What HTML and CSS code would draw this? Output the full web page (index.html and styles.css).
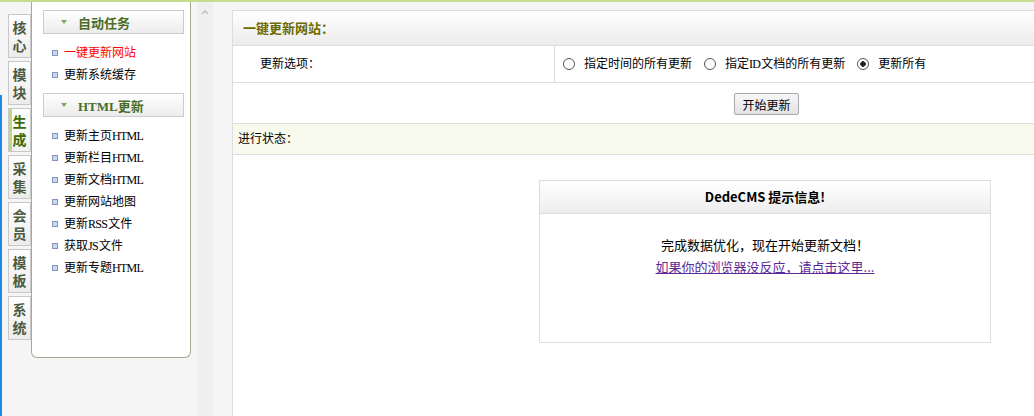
FILE: index.html
```html
<!DOCTYPE html>
<html lang="zh-cn">
<head>
  <meta charset="UTF-8" />
  <title>生成</title>
  <link rel="stylesheet" href="styles.css">
</head>
<body>

<div class="left-frame">
  <ul class="tabs">
    <li class="tab">核<br>心</li>
    <li class="tab">模<br>块</li>
    <li class="tab active">生<br>成</li>
    <li class="tab">采<br>集</li>
    <li class="tab">会<br>员</li>
    <li class="tab">模<br>板</li>
    <li class="tab">系<br>统</li>
  </ul>

  <div class="menu-panel">
    <div class="menu-head"><span class="arrow"></span>自动任务</div>
    <ul class="menu-list">
      <li class="current"><span class="dot"></span>一键更新网站</li>
      <li><span class="dot"></span>更新系统缓存</li>
    </ul>

    <div class="menu-head"><span class="arrow"></span>HTML更新</div>
    <ul class="menu-list">
      <li><span class="dot"></span>更新主页<span class="en">HTML</span></li>
      <li><span class="dot"></span>更新栏目<span class="en">HTML</span></li>
      <li><span class="dot"></span>更新文档<span class="en">HTML</span></li>
      <li><span class="dot"></span>更新网站地图</li>
      <li><span class="dot"></span>更新<span class="en">RSS</span>文件</li>
      <li><span class="dot"></span>获取<span class="en">JS</span>文件</li>
      <li><span class="dot"></span>更新专题<span class="en">HTML</span></li>
    </ul>
  </div>
</div>

<div class="scroll-strip">
  <svg width="8" height="6" viewBox="0 0 8 6"><path d="M1 5 L4 2 L7 5" fill="none" stroke="#c4c4c4" stroke-width="1.6"/></svg>
</div>

<div class="right-frame">
  <div class="main">
    <div class="main-head">一键更新网站：</div>

    <div class="row row-options">
      <div class="cell-label">更新选项：</div>
      <div class="cell-value">
        <label class="opt"><input type="radio" name="uptype" class="radio">指定时间的所有更新</label>
        <label class="opt"><input type="radio" name="uptype" class="radio">指定<span class="en">ID</span>文档的所有更新</label>
        <label class="opt"><input type="radio" name="uptype" class="radio" checked>更新所有</label>
      </div>
    </div>

    <div class="row row-button">
      <button class="btn">开始更新</button>
    </div>

    <div class="row row-status">进行状态：</div>

    <div class="msg-box">
      <div class="msg-head">DedeCMS 提示信息!</div>
      <div class="msg-body">
        完成数据优化，现在开始更新文档！<br>
        <a href="#" class="msg-link">如果你的浏览器没反应，请点击这里...</a>
      </div>
    </div>
  </div>
</div>

</body>
</html>
```

FILE: styles.css
```css
html, body {
  margin: 0;
  padding: 0;
  height: 100%;
}

body {
  box-sizing: border-box;
  height: 100vh;
  border-top: 2px solid #c6dc90;
  display: flex;
  overflow: hidden;
  font-family: "Liberation Serif", "Noto Sans CJK SC", serif;
  font-size: 12px;
  color: #000;
  background: #f5f5f5;
}

ul {
  list-style: none;
  margin: 0;
  padding: 0;
}

/* 宋体里的英文字母比较窄 */
.en {
  letter-spacing: -0.7px;
  margin-right: 1px;
}

/* 左侧菜单框架 */
.left-frame {
  width: 197px;
  flex: none;
  display: flex;
  align-items: flex-start;
  background: linear-gradient(#f5f5f5 0 93px, #1e8ae4 93px) no-repeat 0 0 / 2px 100%, #f5f5f5;
}

.tabs {
  padding: 12px 0 0 8px;
}

.tab {
  box-sizing: border-box;
  width: 23px;
  height: 44px;
  margin-bottom: 3px;
  padding-top: 3px;
  border: 1px solid #c8c8c8;
  background: linear-gradient(#ffffff, #ececec);
  text-align: center;
  font-family: "Noto Sans CJK SC", sans-serif;
  font-size: 14px;
  font-weight: bold;
  line-height: 18px;
  color: #4b5a40;
}

.tab.active {
  color: #3d6a00;
  box-shadow: inset 3px 0 0 #bcd98a;
  background: linear-gradient(#ffffff, #f2f2f2);
}

.menu-panel {
  box-sizing: border-box;
  width: 160px;
  height: 356px;
  padding: 8px 6px 0 11px;
  background: #fff;
  border: 1px solid #a9a991;
  border-top: none;
  border-radius: 0 0 6px 6px;
}

.menu-head {
  box-sizing: border-box;
  height: 24px;
  display: flex;
  align-items: center;
  padding-left: 17px;
  border: 1px solid #cccccc;
  background: linear-gradient(#ffffff, #ececec);
  font-family: "Liberation Serif", "Noto Sans CJK SC", serif;
  font-size: 13px;
  font-weight: bold;
  color: #4a6e2a;
}

.arrow {
  width: 0;
  height: 0;
  margin-right: 11px;
  border-left: 3px solid transparent;
  border-right: 3px solid transparent;
  border-top: 4px solid #78aa58;
}

.menu-list {
  margin: 8px 0 7px;
}

.menu-list li {
  display: flex;
  align-items: center;
  height: 22px;
  line-height: 22px;
  padding-left: 9px;
  white-space: nowrap;
}

.menu-list li.current {
  color: #ff0000;
}

.dot {
  box-sizing: border-box;
  width: 6px;
  height: 6px;
  margin-right: 6px;
  border: 1px solid #8497bd;
  background: #c9d7f0;
}

/* 滚动条 */
.scroll-strip {
  width: 16px;
  flex: none;
  background: #efefef;
  text-align: center;
  padding-top: 7px;
}

.scroll-strip svg {
  display: block;
  margin: 0 auto;
}

/* 右侧主框架 */
.right-frame {
  flex: 1;
  min-width: 0;
  padding: 8px 0 0 19px;
  background: #f5f5f5;
  overflow: hidden;
}

.main {
  width: 1064px;
  height: 100%;
  background: #fff;
  border-left: 1px solid #dddddd;
  border-top: 1px solid #dddddd;
}

.main-head {
  height: 34px;
  line-height: 34px;
  padding-left: 10px;
  border-bottom: 1px solid #dddddd;
  background: linear-gradient(#ffffff, #ececec);
  font-family: "Noto Sans CJK SC", sans-serif;
  font-size: 13px;
  font-weight: bold;
  color: #6b6b00;
}

.row {
  border-bottom: 1px solid #dddddd;
}

.row-options {
  display: flex;
  height: 36px;
  line-height: 36px;
}

.cell-label {
  width: 294px;
  padding-left: 27px;
  border-right: 1px solid #dddddd;
}

.cell-value {
  display: flex;
  align-items: center;
  padding-left: 8px;
}

.opt {
  display: flex;
  align-items: center;
  margin-right: 12px;
}

.radio {
  appearance: none;
  box-sizing: border-box;
  width: 12px;
  height: 12px;
  margin: 0 9px 0 0;
  border: 1px solid #555;
  border-radius: 50%;
  background: #fff;
}

.radio:checked {
  background: radial-gradient(circle, #222 0 2.5px, #fff 3px);
}

.row-button {
  height: 40px;
  display: flex;
  justify-content: center;
  align-items: center;
}

.btn {
  height: 22px;
  width: 65px;
  padding: 0;
  margin: 2px 0 0 3px;
  border: 1px solid #a9a9a9;
  border-radius: 2px;
  background: linear-gradient(#f7f7f7, #e3e3e3);
  font-family: "Noto Sans CJK SC", sans-serif;
  font-size: 12px;
  color: #000;
}

.row-status {
  height: 30px;
  line-height: 30px;
  padding-left: 5px;
  background: #f8faee;
}

/* 提示信息 */
.msg-box {
  width: 452px;
  height: 163px;
  box-sizing: border-box;
  margin: 25px auto 0;
  border: 1px solid #dddddd;
  font-family: "Noto Sans CJK SC", sans-serif;
  font-size: 13px;
}

.msg-head {
  height: 32px;
  line-height: 32px;
  text-align: center;
  font-weight: bold;
  border-bottom: 1px solid #dddddd;
  background: linear-gradient(#ffffff, #ededed);
}

.msg-body {
  padding-top: 20px;
  text-align: center;
  line-height: 22px;
}

.msg-link {
  color: #5b2a96;
  text-decoration: underline;
}
```
